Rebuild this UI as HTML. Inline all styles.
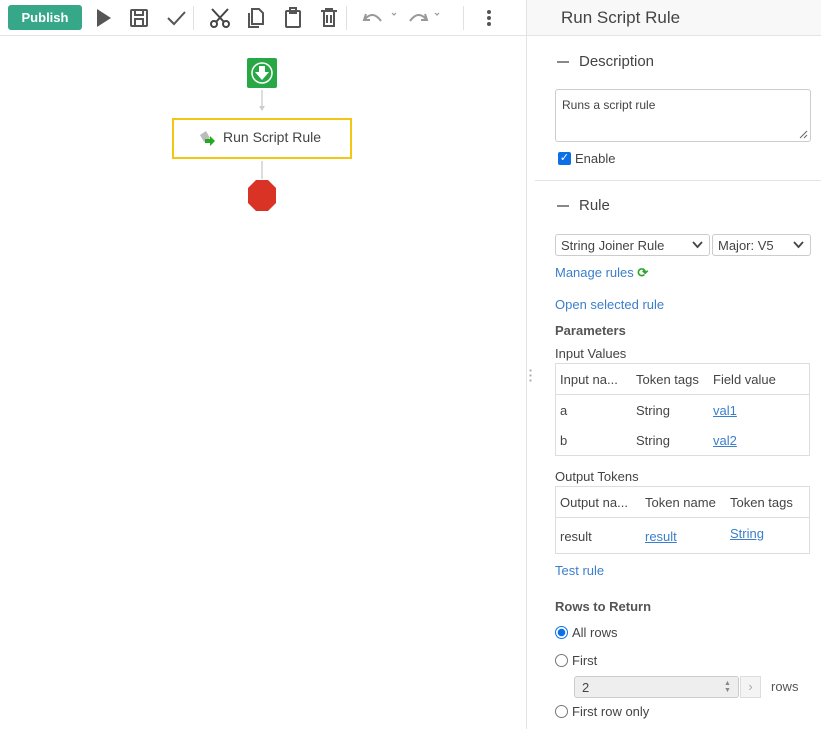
<!DOCTYPE html>
<html><head><meta charset="utf-8"><style>
*{box-sizing:border-box;margin:0;padding:0}
body{width:821px;height:729px;overflow:hidden;background:#fff;font-family:"Liberation Sans",sans-serif;color:#444;font-size:13px;position:relative}
.a{position:absolute}
a,.lk{color:#3b7fcc;text-decoration:none}
.u{text-decoration:underline}
.tb{left:0;top:0;width:526px;height:36px;border-bottom:1px solid #e4e4e4;background:#fff}
.sep{width:1px;height:24px;background:#e0e0e0;top:6px}
.sel{border:1px solid #ccc;border-radius:3px;height:22px;top:234px;font-size:13px;padding:3px 5px;color:#444}
.tbl{border:1px solid #ddd;left:555px;width:255px}
.radio{width:13px;height:13px;border:1px solid #777;border-radius:50%;left:555px}
</style></head><body>
<div class="a tb"></div>
<div class="a" style="left:8px;top:5px;width:74px;height:25px;background:#36a889;border-radius:3px;color:#fff;font-weight:bold;font-size:13px;text-align:center;line-height:25px">Publish</div>
<svg class="a" style="left:0;top:0" width="526" height="36">
<path d="M97 9 L111 18 L97 27Z" fill="#555"/>
<g fill="none" stroke="#555" stroke-width="2"><rect x="131" y="10" width="16" height="16" rx="1"/><rect x="135" y="10" width="8" height="5"/><rect x="135" y="19" width="8" height="7"/></g>
<path d="M168 18 L174 24 L185 12" fill="none" stroke="#555" stroke-width="2"/>
<g fill="none" stroke="#444" stroke-width="2"><circle cx="214" cy="24" r="3"/><circle cx="226" cy="24" r="3"/><path d="M216 22 L228 9 M224 22 L212 9"/></g>
<g fill="none" stroke="#555" stroke-width="2"><path d="M249 13 v14 h10"/><path d="M252 9 h7 l4 4 v11 h-11z"/></g>
<g fill="none" stroke="#555" stroke-width="2"><rect x="286" y="11" width="14" height="16" rx="1"/><rect x="290" y="8" width="6" height="5"/></g>
<g fill="none" stroke="#555" stroke-width="2"><path d="M321 11 h16 M324 11 v15 h10 v-15 M327 15 v8 M331 15 v8 M326 11 v-2 h6 v2"/></g>
<g fill="none" stroke="#999" stroke-width="2"><path d="M366 14 l-2 6 6 0 M365 19 q8-9 16 2"/><path d="M392 13 l2 2 2-2" stroke-width="1.2"/><path d="M425 14 l2 6 -6 0 M426 19 q-8-9 -16 2"/><path d="M435 13 l2 2 2-2" stroke-width="1.2"/></g>
<g fill="#555"><circle cx="489" cy="12" r="2"/><circle cx="489" cy="18" r="2"/><circle cx="489" cy="24" r="2"/></g>
</svg>
<div class="a sep" style="left:193px"></div><div class="a sep" style="left:346px"></div><div class="a sep" style="left:463px"></div>
<svg class="a" style="left:240px;top:55px" width="50" height="160">
<rect x="7" y="3" width="30" height="30" rx="2" fill="#28a745"/>
<circle cx="22" cy="18" r="10" fill="none" stroke="#fff" stroke-width="1.5"/>
<path d="M19 11 h6 v6 h4 l-7 8 -7-8 h4z" fill="#fff"/>
<path d="M22 35 v18" stroke="#ddd" stroke-width="2"/><path d="M19 51 l3 5 3-5z" fill="#ccc"/>
<path d="M22 106 v18" stroke="#ddd" stroke-width="2"/>
<path d="M16 125 h12 l8 8 v15 l-8 8 h-12 l-8-8 v-15z" fill="#d93325"/>
</svg>
<div class="a" style="left:172px;top:118px;width:180px;height:41px;border:2px solid #f3c613;font-size:14px;color:#444;padding:9px 0 0 49px">Run Script Rule</div>
<svg class="a" style="left:197px;top:129px" width="20" height="20"><path d="M3 6 l6-4 4 7 -6 4z" fill="#bbb"/><path d="M8 10 h5 v-3 l5 5 -5 5 v-3 h-5z" fill="#2a2"/></svg>
<div class="a" style="left:526px;top:0;width:1px;height:729px;background:#e2e2e2"></div>
<div class="a" style="left:529px;top:368px;width:3px;height:16px;background:radial-gradient(circle,#aaa 1px,transparent 1.2px) 0 0/3px 5px"></div>
<div class="a" style="left:527px;top:0;width:294px;height:36px;background:#f8f8f8;border-bottom:1px solid #e4e4e4"></div>
<div class="a" style="left:561px;top:8px;font-size:17px;color:#444">Run Script Rule</div>
<div class="a" style="left:557px;top:61px;width:12px;height:2px;background:#888"></div>
<div class="a" style="left:579px;top:53px;font-size:15px;color:#444">Description</div>
<div class="a" style="left:555px;top:89px;width:256px;height:53px;border:1px solid #ccc;border-radius:3px;padding:8px 6px;font-size:12px">Runs a script rule
<svg style="position:absolute;right:2px;bottom:2px" width="10" height="10"><path d="M9 2 L2 9 M9 6 L6 9" stroke="#666" stroke-width="1"/></svg></div>
<div class="a" style="left:558px;top:152px;width:13px;height:13px;background:#0b6fe8;border-radius:2px;color:#fff;font-size:11px;line-height:13px;text-align:center">✓</div>
<div class="a" style="left:575px;top:151px">Enable</div>
<div class="a" style="left:535px;top:180px;width:286px;height:1px;background:#e4e4e4"></div>
<div class="a" style="left:557px;top:205px;width:12px;height:2px;background:#888"></div>
<div class="a" style="left:579px;top:197px;font-size:15px;color:#444">Rule</div>
<div class="a sel" style="left:555px;width:155px">String Joiner Rule<svg style="position:absolute;right:6px;top:6px" width="11" height="8"><path d="M1 1 L5.5 6 L10 1" fill="none" stroke="#444" stroke-width="1.8"/></svg></div>
<div class="a sel" style="left:712px;width:99px">Major: V5<svg style="position:absolute;right:6px;top:6px" width="11" height="8"><path d="M1 1 L5.5 6 L10 1" fill="none" stroke="#444" stroke-width="1.8"/></svg></div>
<div class="a lk" style="left:555px;top:265px">Manage rules <span style="color:#2aa52a;font-weight:bold">⟳</span></div>
<div class="a lk" style="left:555px;top:297px">Open selected rule</div>
<div class="a" style="left:555px;top:323px;font-weight:bold;color:#555">Parameters</div>
<div class="a" style="left:555px;top:346px">Input Values</div>
<div class="a tbl" style="top:363px;height:93px"></div>
<div class="a" style="left:556px;top:394px;width:253px;height:1px;background:#ddd"></div>
<div class="a" style="left:560px;top:372px">Input na...</div><div class="a" style="left:636px;top:372px">Token tags</div><div class="a" style="left:713px;top:372px">Field value</div>
<div class="a" style="left:560px;top:403px">a</div><div class="a" style="left:636px;top:403px">String</div><div class="a lk u" style="left:713px;top:403px">val1</div>
<div class="a" style="left:560px;top:433px">b</div><div class="a" style="left:636px;top:433px">String</div><div class="a lk u" style="left:713px;top:433px">val2</div>
<div class="a" style="left:555px;top:469px">Output Tokens</div>
<div class="a tbl" style="top:486px;height:68px"></div>
<div class="a" style="left:556px;top:517px;width:253px;height:1px;background:#ddd"></div>
<div class="a" style="left:560px;top:495px">Output na...</div><div class="a" style="left:645px;top:495px">Token name</div><div class="a" style="left:730px;top:495px">Token tags</div>
<div class="a" style="left:560px;top:529px">result</div><div class="a lk u" style="left:645px;top:529px">result</div><div class="a lk u" style="left:730px;top:526px">String</div>
<div class="a lk" style="left:555px;top:563px">Test rule</div>
<div class="a" style="left:555px;top:599px;font-weight:bold;color:#555">Rows to Return</div>
<div class="a radio" style="top:626px;border:1px solid #0b6fe8;background:radial-gradient(circle,#0b6fe8 3.5px,#fff 4px)"></div>
<div class="a" style="left:572px;top:625px">All rows</div>
<div class="a radio" style="top:654px"></div><div class="a" style="left:572px;top:653px">First</div>
<div class="a" style="left:574px;top:676px;width:165px;height:22px;border:1px solid #ccc;border-radius:3px;background:#eee;padding:3px 7px">2</div>
<div class="a" style="left:740px;top:676px;width:21px;height:22px;border:1px solid #ddd;background:#f4f4f4;color:#aaa;text-align:center;line-height:20px">›</div>
<div class="a" style="left:724px;top:680px;font-size:7px;color:#888;line-height:7px">▲<br>▼</div>
<div class="a" style="left:771px;top:679px;color:#555">rows</div>
<div class="a radio" style="top:705px"></div><div class="a" style="left:572px;top:704px">First row only</div>
</body></html>
